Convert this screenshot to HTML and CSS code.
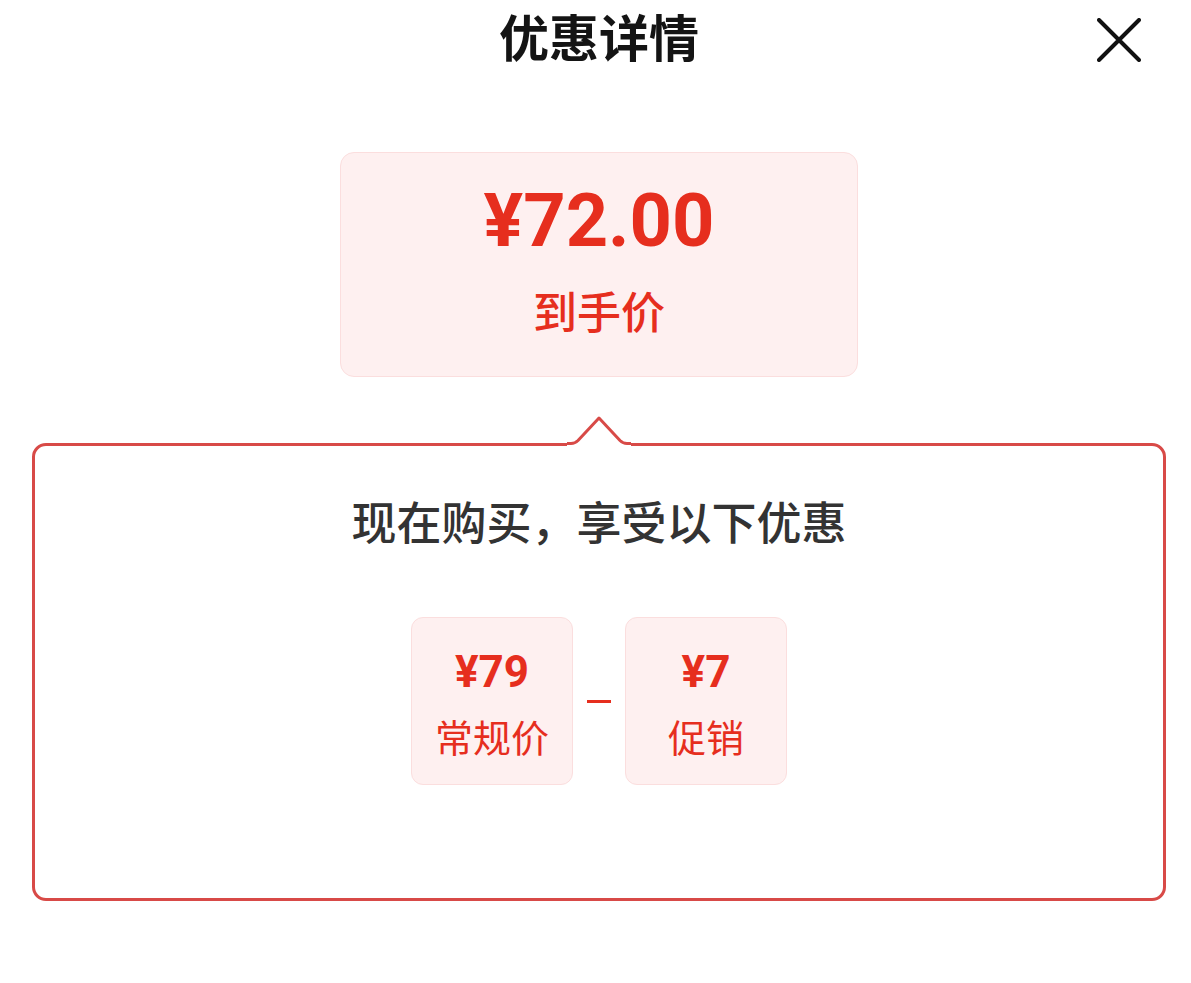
FILE: index.html
```html
<!DOCTYPE html>
<html lang="zh-CN">
<head>
    <meta charset="UTF-8">
    <meta name="viewport" content="width=device-width, initial-scale=1.0">
    <title>优惠详情</title>
    <link rel="stylesheet" href="styles.css">
</head>
<body>
    <div class="sheet">
        <div class="header">
            <span></span>
            <h1 class="title">优惠详情</h1>
            <button class="close" aria-label="关闭">
                <svg width="44" height="44" viewBox="0 0 44 44">
                    <path d="M2 2 L42 42 M42 2 L2 42" stroke="#111" stroke-width="4" stroke-linecap="round" fill="none"/>
                </svg>
            </button>
        </div>

        <div class="final-price">
            <div class="amount">¥72.00</div>
            <div class="amount-label">到手价</div>
        </div>

        <div class="breakdown">
            <!-- little pointer up to the price card -->
            <svg class="arrow" width="64" height="32" viewBox="0 0 64 32">
                <path d="M0 28.5 H4 Q8 28.5 11 25.5 L32 3 L53 25.5 Q56 28.5 60 28.5 H64 V32 H0 Z" fill="#fff"/>
                <path d="M0 28.5 H4 Q8 28.5 11 25.5 L32 3 L53 25.5 Q56 28.5 60 28.5 H64" stroke="#d84a47" stroke-width="3" fill="none" stroke-linejoin="round"/>
            </svg>
            <div class="breakdown-title">现在购买，享受以下优惠</div>
            <div class="formula">
                <div class="chip">
                    <div class="chip-price">¥79</div>
                    <div class="chip-label">常规价</div>
                </div>
                <div class="minus"></div>
                <div class="chip">
                    <div class="chip-price">¥7</div>
                    <div class="chip-label">促销</div>
                </div>
            </div>
        </div>
    </div>
</body>
</html>
```

FILE: styles.css
```css
* {
    margin: 0;
    padding: 0;
    box-sizing: border-box;
}

body {
    background: #fff;
    font-family: Roboto, "Noto Sans CJK SC", sans-serif;
    color: #1a1a1a;
}

.sheet {
    padding: 0 25px 0 32px;
}

.header {
    display: grid;
    grid-template-columns: 1fr auto 1fr;
    align-items: center;
    height: 80px;
}

.title {
    font-size: 50px;
    font-weight: 700;
    line-height: 80px;
    color: #141414;
}

.close {
    justify-self: end;
    margin-right: 25px;
    width: 44px;
    height: 44px;
    border: none;
    background: none;
    display: flex;
}

.final-price {
    width: 518px;
    height: 225px;
    margin: 72px auto 0;
    padding-top: 28px;
    background: #fef0f0;
    border: 1px solid #fbdede;
    border-radius: 14px;
    text-align: center;
    color: #e62e1e;
}

.amount {
    font-size: 74px;
    font-weight: 700;
    line-height: 80px;
}

.amount-label {
    margin-top: 28px;
    font-size: 44px;
    font-weight: 500;
    line-height: 50px;
}

.breakdown {
    position: relative;
    margin-top: 66px;
    height: 458px;
    padding-top: 49px;
    border: 3px solid #d84a47;
    border-radius: 14px;
    text-align: center;
}

.arrow {
    position: absolute;
    top: -31px;
    left: 50%;
    margin-left: -32px;
}

.breakdown-title {
    font-size: 45px;
    font-weight: 500;
    line-height: 60px;
    color: #333;
}

.formula {
    display: flex;
    justify-content: center;
    align-items: center;
    margin-top: 62px;
    gap: 14px;
}

.chip {
    width: 162px;
    height: 168px;
    padding-top: 29px;
    background: #fef0f0;
    border: 1px solid #fbdede;
    border-radius: 12px;
    color: #e62e1e;
}

.chip-price {
    font-size: 44px;
    font-weight: 700;
    line-height: 50px;
}

.chip-label {
    margin-top: 19px;
    font-size: 38px;
    line-height: 46px;
}

.minus {
    width: 24px;
    height: 3px;
    background: #e62e1e;
}
```
